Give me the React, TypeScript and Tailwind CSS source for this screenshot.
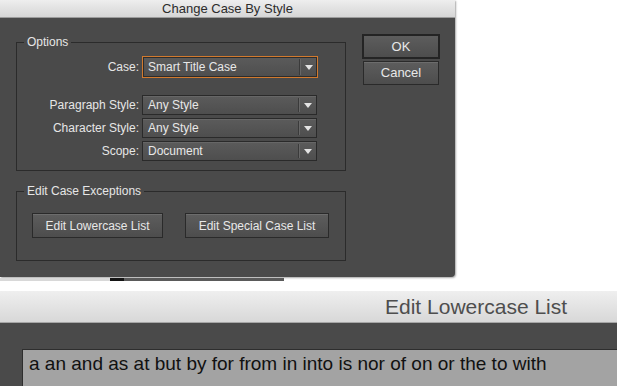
import React from "react";

function Arrow() {
  return (
    <div className="w-0 h-0 border-x-[4px] border-x-transparent border-t-[5px] border-t-[#e4e4e4]" />
  );
}

function Select({ value, focused }: { value: string; focused?: boolean }) {
  return (
    <div
      className={
        focused
          ? "w-[176px] h-[22px] flex items-center border border-[#d27a2e] shadow-[inset_0_0_0_1px_#2c2c2c] bg-gradient-to-b from-[#5b5b5b] to-[#4e4e4e]"
          : "w-[175px] h-[20px] flex items-center border border-[#2a2a2a] bg-gradient-to-b from-[#5b5b5b] to-[#4e4e4e] shadow-[inset_0_1px_0_rgba(255,255,255,0.08)]"
      }
    >
      <div className="flex-1 pl-[5px] text-[12px] leading-[14px] text-[#e8e8e8] whitespace-nowrap">{value}</div>
      <div className="self-stretch w-[1px] bg-[#3a3a3a] my-[2px]" />
      <div className="self-stretch w-[1px] bg-[#676767] my-[2px]" />
      <div className="w-[16px] flex items-center justify-center">
        <Arrow />
      </div>
    </div>
  );
}

function Row({ label, children }: { label: string; children: React.ReactNode }) {
  return (
    <div className="flex items-center">
      <div className="w-[122px] text-right text-[12px] leading-[14px] text-[#e6e6e6] whitespace-nowrap">{label}</div>
      <div className="ml-[3px]">{children}</div>
    </div>
  );
}

function Btn({ label, w }: { label: string; w: string }) {
  return (
    <div
      className={`${w} h-[25px] flex items-center justify-center border border-[#2a2a2a] bg-gradient-to-b from-[#5d5d5d] to-[#4d4d4d] shadow-[inset_0_1px_0_rgba(255,255,255,0.1)] text-[12px] text-[#e8e8e8] whitespace-nowrap`}
    >
      {label}
    </div>
  );
}

export default function App() {
  return (
    <div className="w-[617px] h-[386px] overflow-hidden bg-white font-['Liberation_Sans',Arial,sans-serif]">
      {/* Top dialog */}
      <div className="w-[455px] h-[277px] flex flex-col bg-[#4a4a4a] rounded-br-[4px] shadow-[1px_1px_2px_rgba(0,0,0,0.35)]">
        <div className="h-[18px] shrink-0 flex items-center justify-center border-b border-[#9c9c9c] bg-gradient-to-b from-[#eeeeee] to-[#d6d6d6] text-[13px] leading-[15px] text-[#2c2c2c]">
          Change Case By Style
        </div>
        <div className="flex items-start pl-[16px]">
          <div className="w-[330px] mt-[17px] flex flex-col">
            <fieldset className="border border-[#2b2b2b] pb-[9px]">
              <legend className="ml-[7px] px-[3px] text-[12px] leading-[14px] text-[#e6e6e6]">Options</legend>
              <div className="mt-[7px] flex flex-col">
                <Row label="Case:">
                  <Select value="Smart Title Case" focused />
                </Row>
                <div className="mt-[17px] flex flex-col gap-[3px]">
                  <Row label="Paragraph Style:">
                    <Select value="Any Style" />
                  </Row>
                  <Row label="Character Style:">
                    <Select value="Any Style" />
                  </Row>
                  <Row label="Scope:">
                    <Select value="Document" />
                  </Row>
                </div>
              </div>
            </fieldset>
            <fieldset className="mt-[13px] border border-[#2b2b2b] pb-[22px]">
              <legend className="ml-[7px] px-[3px] text-[12px] leading-[14px] text-[#e6e6e6]">Edit Case Exceptions</legend>
              <div className="flex gap-[22px] pl-[15px] pt-[15px]">
                <Btn label="Edit Lowercase List" w="w-[131px]" />
                <Btn label="Edit Special Case List" w="w-[144px]" />
              </div>
            </fieldset>
          </div>
          <div className="ml-[16px] mt-[16px] flex flex-col">
            <div className="w-[78px] h-[25px] flex items-center justify-center border-2 border-[#242424] bg-gradient-to-b from-[#5d5d5d] to-[#4d4d4d] text-[13px] text-[#e8e8e8]">
              OK
            </div>
            <div className="mt-[2px] ml-[1px] w-[76px] h-[24px] flex items-center justify-center border border-[#2a2a2a] bg-gradient-to-b from-[#5d5d5d] to-[#4d4d4d] shadow-[inset_0_1px_0_rgba(255,255,255,0.1)] text-[13px] text-[#e8e8e8]">
              Cancel
            </div>
          </div>
        </div>
      </div>
      {/* strip under dialog */}
      <div className="flex h-[3px] mt-[1px]">
        <div className="w-[110px] bg-[#d8d8d8]" />
        <div className="w-[14px] bg-[#141414]" />
        <div className="w-[160px] bg-[#5a5a5a]" />
      </div>
      <div className="h-[10px]" />
      {/* Bottom dialog */}
      <div className="w-[700px] flex flex-col">
        <div className="h-[32px] flex items-center pl-[385px] border-b border-[#a6a6a6] bg-gradient-to-b from-[#efefef] to-[#d8d8d8] text-[21px] leading-[24px] text-[#4e4e4e] whitespace-nowrap">
          Edit Lowercase List
        </div>
        <div className="h-[80px] bg-[#4a4a4a] pt-[26px] pl-[22px]">
          <div className="h-[60px] border border-[#2e2e2e] bg-[#a3a3a3] pl-[6px] pt-[3px] text-[19px] leading-[22px] text-[#111111] whitespace-nowrap">
            a an and as at but by for from in into is nor of on or the to with
          </div>
        </div>
      </div>
    </div>
  );
}
